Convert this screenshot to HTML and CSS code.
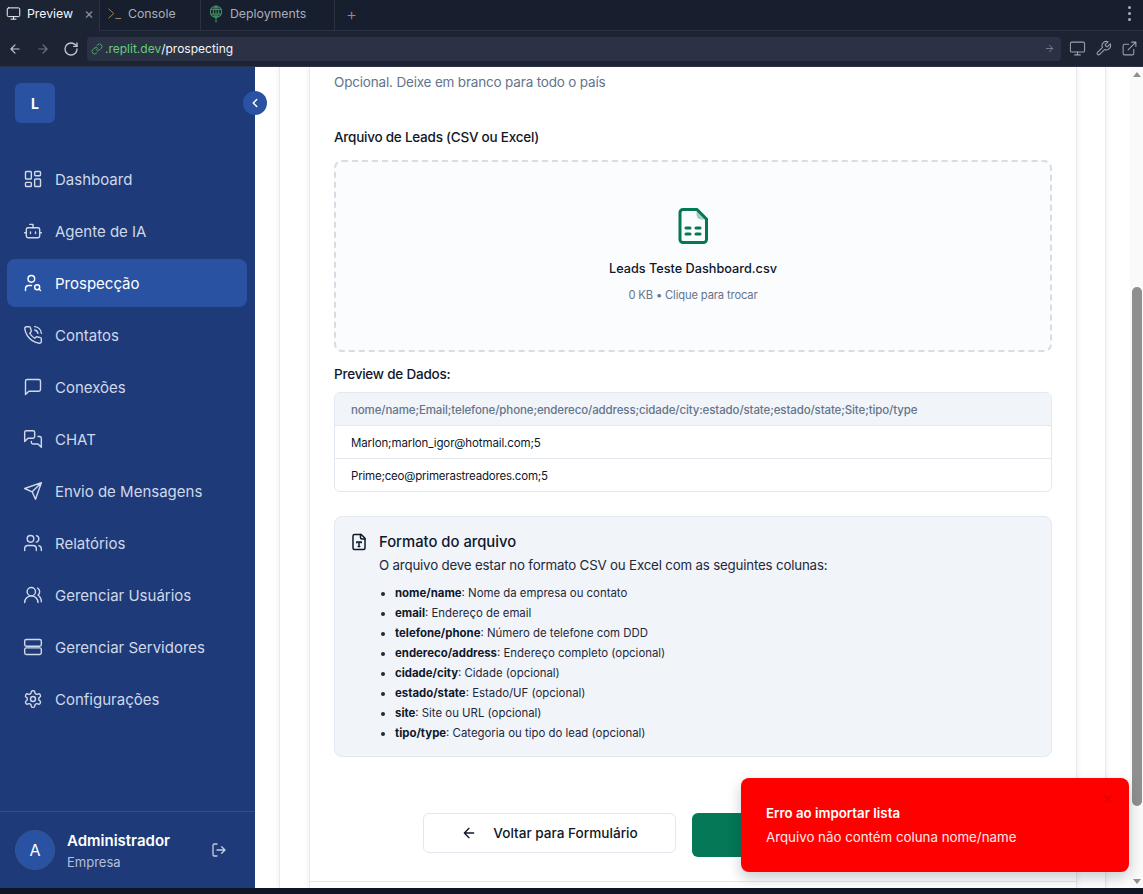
FILE: index.html
```html
<!DOCTYPE html>
<html lang="pt-BR">
<head>
  <meta charset="utf-8">
  <title>Prospecção</title>
  <link rel="stylesheet" href="styles.css">
</head>
<body>
  <div class="window">
    <div class="tabs">
      <div class="tab tab-active">
        <svg class="tab-icon" viewBox="0 0 24 24"><rect width="20" height="14" x="2" y="3" rx="2"/><path d="M8 21h8M12 17v4"/></svg>
        <span>Preview</span>
        <span class="tab-close">×</span>
      </div>
      <div class="tab tab-console">
        <svg class="tab-icon console-icon" viewBox="0 0 24 24"><path d="M3 5l8 7-8 7M14 20h8"/></svg>
        <span>Console</span>
      </div>
      <div class="tab tab-deploy">
        <svg class="tab-icon deploy-icon" viewBox="0 0 24 24"><circle cx="12" cy="9" r="7.5"/><path d="M12 1.5v21M5 6h14M5 12h14M12 1.5c-5 4-5 11 0 15M12 1.5c5 4 5 11 0 15"/></svg>
        <span>Deployments</span>
      </div>
      <div class="tab-rest">
        <span class="tab-plus">+</span>
        <span class="tab-dots"><i></i><i></i><i></i></span>
      </div>
    </div>
    <div class="urlbar">
      <svg class="nav-icon" viewBox="0 0 24 24"><path d="m12 19-7-7 7-7M19 12H5"/></svg>
      <svg class="nav-icon nav-dim" viewBox="0 0 24 24"><path d="m12 5 7 7-7 7M5 12h14"/></svg>
      <svg class="nav-icon nav-reload" viewBox="0 0 24 24"><path d="M21 12a9 9 0 1 1-9-9c2.52 0 4.93 1 6.74 2.74L21 8"/><path d="M21 3v5h-5"/></svg>
      <div class="url-input">
        <svg class="url-link" viewBox="0 0 24 24"><path d="M10 13a5 5 0 0 0 7.54.54l3-3a5 5 0 0 0-7.07-7.07l-1.72 1.71"/><path d="M14 11a5 5 0 0 0-7.54-.54l-3 3a5 5 0 0 0 7.07 7.07l1.71-1.71"/></svg>
        <span class="url-host">.replit.dev</span><span class="url-path">/prospecting</span>
        <svg class="url-go" viewBox="0 0 24 24"><path d="m12 5 7 7-7 7M5 12h14"/></svg>
      </div>
      <div class="url-tools">
        <svg viewBox="0 0 24 24"><rect width="20" height="14" x="2" y="3" rx="2"/><path d="M8 21h8M12 17v4"/></svg>
        <svg viewBox="0 0 24 24"><path d="M14.7 6.3a1 1 0 0 0 0 1.4l1.6 1.6a1 1 0 0 0 1.4 0l3.77-3.77a6 6 0 0 1-7.94 7.94l-6.91 6.91a2.12 2.12 0 0 1-3-3l6.91-6.91a6 6 0 0 1 7.94-7.94l-3.76 3.76z"/></svg>
        <svg viewBox="0 0 24 24"><path d="M18 13v6a2 2 0 0 1-2 2H5a2 2 0 0 1-2-2V8a2 2 0 0 1 2-2h6M15 3h6v6M10 14 21 3"/></svg>
      </div>
    </div>

    <div class="app">
      <aside class="sidebar">
        <div class="side-head">
          <div class="logo">L</div>
        </div>
        <button class="collapse">
          <svg viewBox="0 0 24 24"><path d="m15 18-6-6 6-6"/></svg>
        </button>
        <nav class="side-nav">
          <a class="nav-item">
            <svg viewBox="0 0 24 24"><rect width="7" height="9" x="3" y="3" rx="1"/><rect width="7" height="5" x="14" y="3" rx="1"/><rect width="7" height="9" x="14" y="12" rx="1"/><rect width="7" height="5" x="3" y="16" rx="1"/></svg>
            Dashboard
          </a>
          <a class="nav-item">
            <svg viewBox="0 0 24 24"><path d="M12 8V4H8"/><rect width="16" height="12" x="4" y="8" rx="2"/><path d="M2 14h2M20 14h2M15 13v2M9 13v2"/></svg>
            Agente de IA
          </a>
          <a class="nav-item nav-active">
            <svg viewBox="0 0 24 24"><circle cx="10" cy="7" r="4"/><path d="M10.3 15H7a4 4 0 0 0-4 4v2"/><circle cx="17" cy="17" r="3"/><path d="m21 21-1.9-1.9"/></svg>
            Prospecção
          </a>
          <a class="nav-item">
            <svg viewBox="0 0 24 24"><path d="M22 16.92v3a2 2 0 0 1-2.18 2 19.79 19.79 0 0 1-8.63-3.07 19.5 19.5 0 0 1-6-6 19.79 19.79 0 0 1-3.07-8.67A2 2 0 0 1 4.11 2h3a2 2 0 0 1 2 1.72 12.84 12.84 0 0 0 .7 2.81 2 2 0 0 1-.45 2.11L8.09 9.91a16 16 0 0 0 6 6l1.27-1.27a2 2 0 0 1 2.11-.45 12.84 12.84 0 0 0 2.81.7A2 2 0 0 1 22 16.92z"/><path d="M14.05 2a9 9 0 0 1 8 7.94M14.05 6A5 5 0 0 1 18 10"/></svg>
            Contatos
          </a>
          <a class="nav-item">
            <svg viewBox="0 0 24 24"><path d="M21 15a2 2 0 0 1-2 2H7l-4 4V5a2 2 0 0 1 2-2h14a2 2 0 0 1 2 2z"/></svg>
            Conexões
          </a>
          <a class="nav-item">
            <svg viewBox="0 0 24 24"><path d="M14 9a2 2 0 0 1-2 2H6l-4 4V4a2 2 0 0 1 2-2h8a2 2 0 0 1 2 2z"/><path d="M18 9h2a2 2 0 0 1 2 2v11l-4-4h-6a2 2 0 0 1-2-2v-1"/></svg>
            CHAT
          </a>
          <a class="nav-item">
            <svg viewBox="0 0 24 24"><path d="m22 2-7 20-4-9-9-4ZM22 2 11 13"/></svg>
            Envio de Mensagens
          </a>
          <a class="nav-item">
            <svg viewBox="0 0 24 24"><path d="M16 21v-2a4 4 0 0 0-4-4H6a4 4 0 0 0-4 4v2"/><circle cx="9" cy="7" r="4"/><path d="M22 21v-2a4 4 0 0 0-3-3.87M16 3.13a4 4 0 0 1 0 7.75"/></svg>
            Relatórios
          </a>
          <a class="nav-item">
            <svg viewBox="0 0 24 24"><path d="M18 21a8 8 0 0 0-16 0"/><circle cx="10" cy="8" r="5"/><path d="M22 20c0-3.37-2-6.5-4-8a5 5 0 0 0-.45-8.3"/></svg>
            Gerenciar Usuários
          </a>
          <a class="nav-item">
            <svg viewBox="0 0 24 24"><rect width="20" height="8" x="2" y="3" rx="2"/><rect width="20" height="8" x="2" y="13" rx="2"/></svg>
            Gerenciar Servidores
          </a>
          <a class="nav-item">
            <svg viewBox="0 0 24 24"><path d="M12.22 2h-.44a2 2 0 0 0-2 2v.18a2 2 0 0 1-1 1.73l-.43.25a2 2 0 0 1-2 0l-.15-.08a2 2 0 0 0-2.73.73l-.22.38a2 2 0 0 0 .73 2.73l.15.1a2 2 0 0 1 1 1.72v.51a2 2 0 0 1-1 1.74l-.15.09a2 2 0 0 0-.73 2.73l.22.38a2 2 0 0 0 2.73.73l.15-.08a2 2 0 0 1 2 0l.43.25a2 2 0 0 1 1 1.73V20a2 2 0 0 0 2 2h.44a2 2 0 0 0 2-2v-.18a2 2 0 0 1 1-1.73l.43-.25a2 2 0 0 1 2 0l.15.08a2 2 0 0 0 2.73-.73l.22-.39a2 2 0 0 0-.73-2.73l-.15-.08a2 2 0 0 1-1-1.74v-.5a2 2 0 0 1 1-1.74l.15-.09a2 2 0 0 0 .73-2.73l-.22-.38a2 2 0 0 0-2.73-.73l-.15.08a2 2 0 0 1-2 0l-.43-.25a2 2 0 0 1-1-1.73V4a2 2 0 0 0-2-2z"/><circle cx="12" cy="12" r="3"/></svg>
            Configurações
          </a>
        </nav>
        <div class="side-user">
          <div class="avatar">A</div>
          <div class="user-info">
            <div class="user-name">Administrador</div>
            <div class="user-org">Empresa</div>
          </div>
          <svg class="logout" viewBox="0 0 24 24"><path d="M9 21H5a2 2 0 0 1-2-2V5a2 2 0 0 1 2-2h4M16 17l5-5-5-5M21 12H9"/></svg>
        </div>
      </aside>

      <main class="content">
        <div class="panel">
          <div class="card">
            <div class="card-body">
              <p class="hint">Opcional. Deixe em branco para todo o país</p>

              <label class="field-label">Arquivo de Leads (CSV ou Excel)</label>
              <div class="dropzone">
                <svg class="file-icon" viewBox="0 0 30 36"><path d="M5 1.5h14l9.5 9.5v20.5a3 3 0 0 1-3 3H5a3 3 0 0 1-3-3V4.5a3 3 0 0 1 3-3z"/><path class="file-fold" d="M19 2v5a4 4 0 0 0 4 4h5z"/><path class="file-dash" d="M8 20h4M18 20h4M8 26h4M18 26h4"/></svg>
                <div class="file-name">Leads Teste Dashboard.csv</div>
                <div class="file-meta">0 KB • Clique para trocar</div>
              </div>

              <div class="preview-title">Preview de Dados:</div>
              <div class="preview">
                <div class="preview-row preview-head">nome/name;Email;telefone/phone;endereco/address;cidade/city:estado/state;estado/state;Site;tipo/type</div>
                <div class="preview-row">Marlon;marlon_igor@hotmail.com;5</div>
                <div class="preview-row">Prime;ceo@primerastreadores.com;5</div>
              </div>

              <div class="format">
                <svg class="format-icon" viewBox="0 0 24 24"><path d="M15 2H6a2 2 0 0 0-2 2v16a2 2 0 0 0 2 2h12a2 2 0 0 0 2-2V7Z"/><path d="M14 2v4a2 2 0 0 0 2 2h4M9 13v-1h6v1M12 12v6M11 18h2"/></svg>
                <div class="format-text">
                  <h3>Formato do arquivo</h3>
                  <p>O arquivo deve estar no formato CSV ou Excel com as seguintes colunas:</p>
                  <ul>
                    <li><b>nome/name</b>: Nome da empresa ou contato</li>
                    <li><b>email</b>: Endereço de email</li>
                    <li><b>telefone/phone</b>: Número de telefone com DDD</li>
                    <li><b>endereco/address</b>: Endereço completo (opcional)</li>
                    <li><b>cidade/city</b>: Cidade (opcional)</li>
                    <li><b>estado/state</b>: Estado/UF (opcional)</li>
                    <li><b>site</b>: Site ou URL (opcional)</li>
                    <li><b>tipo/type</b>: Categoria ou tipo do lead (opcional)</li>
                  </ul>
                </div>
              </div>

              <div class="actions">
                <button class="btn-back">
                  <svg viewBox="0 0 24 24"><path d="m12 19-7-7 7-7M19 12H5"/></svg>
                  Voltar para Formulário
                </button>
                <button class="btn-import"></button>
              </div>
            </div>
          </div>
        </div>
      </main>

      <div class="scrollbar">
        <span class="arrow-up"></span>
        <div class="scroll-track"><div class="scroll-thumb"></div></div>
        <span class="arrow-down"></span>
      </div>

      <div class="toast">
        <span class="toast-close">×</span>
        <div class="toast-title">Erro ao importar lista</div>
        <div class="toast-msg">Arquivo não contém coluna nome/name</div>
      </div>
    </div>
    <div class="bottom"></div>
  </div>
</body>
</html>
```

FILE: styles.css
```css
* {
  box-sizing: border-box;
}

html, body {
  margin: 0;
  height: 100%;
  overflow: hidden;
}

body {
  font-family: Inter, "Noto Sans", sans-serif;
  background: #0e1525;
  color: #0f172a;
}

svg {
  fill: none;
  stroke: currentColor;
  stroke-width: 2;
  stroke-linecap: round;
  stroke-linejoin: round;
  flex: none;
}

.window {
  display: flex;
  flex-direction: column;
  height: 894px;
}

/* replit chrome */
.tabs {
  display: flex;
  height: 31px;
  background: #171e2e;
  font-size: 12.3px;
  color: #a9aeb8;
}

.tab {
  display: flex;
  align-items: center;
  height: 31px;
  border-right: 1px solid #2b3245;
  border-bottom: 1px solid #2b3245;
  padding-bottom: 3px;
}

.tab-active {
  width: 100px;
  padding-left: 6px;
  gap: 6px;
  color: #f5f6f8;
  background: #1c2333;
  border-bottom-color: #1c2333;
}

.tab-console {
  width: 101px;
  padding-left: 7px;
  gap: 6px;
}

.tab-deploy {
  width: 134px;
  padding-left: 6px;
  gap: 5px;
}

.tab-icon {
  width: 15px;
  height: 15px;
  stroke-width: 1.6;
}

.console-icon {
  color: #9c8558;
}

.deploy-icon {
  width: 18px;
  height: 18px;
  color: #3f8f5f;
  stroke-width: 1.5;
}

.tab-close {
  font-size: 15px;
  color: #8a8f9a;
  margin-left: 5px;
}

.tab-rest {
  flex: 1;
  display: flex;
  align-items: center;
  justify-content: space-between;
  height: 31px;
  padding: 0 12px 3px 11px;
  border-bottom: 1px solid #2b3245;
}

.tab-plus {
  font-size: 17px;
  font-weight: 300;
  color: #8a8f9a;
}

.tab-dots {
  display: flex;
  flex-direction: column;
  gap: 3px;
}

.tab-dots i {
  width: 3px;
  height: 3px;
  border-radius: 50%;
  background: #a9aeb8;
}

.urlbar {
  display: flex;
  align-items: center;
  height: 36px;
  background: #1c2333;
  border-bottom: 1px solid #2b3245;
  padding-left: 8px;
  color: #c4c8d0;
}

.nav-icon {
  width: 14px;
  height: 14px;
  margin-right: 14px;
}

.nav-dim {
  color: #6f7583;
}

.nav-reload {
  width: 16px;
  height: 16px;
  margin-right: 8px;
  margin-left: -1px;
}

.url-input {
  display: flex;
  align-items: center;
  width: 974px;
  height: 24px;
  padding: 0 6px 0 4px;
  background: #2b3245;
  border-radius: 4px;
  font-size: 12px;
}

.url-link {
  width: 12px;
  height: 12px;
  margin-right: 2px;
  color: #4aa864;
}

.url-host {
  color: #62d076;
}

.url-path {
  color: #f5f6f8;
}

.url-go {
  width: 11px;
  height: 11px;
  margin-left: auto;
  color: #7b8190;
}

.url-tools {
  display: flex;
  gap: 9px;
  margin-left: 8px;
  color: #9ca1ac;
}

.url-tools svg {
  width: 17px;
  height: 17px;
  stroke-width: 1.5;
}

/* app */
.app {
  position: relative;
  display: flex;
  height: 821px;
  overflow: hidden;
  background: #fff;
}

.sidebar {
  position: relative;
  display: flex;
  flex-direction: column;
  width: 255px;
  flex: none;
  background: #1e3a78;
  color: #cfd9ea;
}

.side-head {
  padding: 16px 15px 0;
}

.logo {
  display: flex;
  align-items: center;
  justify-content: center;
  width: 40px;
  height: 40px;
  border-radius: 6px;
  background: #2a52a3;
  color: #fff;
  font-size: 14px;
  font-weight: 700;
}

.collapse {
  position: absolute;
  top: 24px;
  left: 243px;
  z-index: 3;
  display: flex;
  align-items: center;
  justify-content: center;
  width: 24px;
  height: 24px;
  padding: 0;
  border: none;
  border-radius: 50%;
  background: #2a52a3;
  color: #fff;
}

.collapse svg {
  width: 14px;
  height: 14px;
  stroke-width: 2.5;
}

.side-nav {
  display: flex;
  flex-direction: column;
  gap: 4px;
  padding: 32px 8px 0 7px;
}

.nav-item {
  display: flex;
  align-items: center;
  gap: 12px;
  height: 48px;
  padding-left: 16px;
  border-radius: 8px;
  font-size: 15px;
}

.nav-item svg {
  width: 20px;
  height: 20px;
  stroke-width: 1.7;
}

.nav-active {
  background: #2a52a3;
  color: #fff;
}

.side-user {
  display: flex;
  align-items: center;
  height: 77px;
  margin-top: auto;
  padding: 0 28px 0 15px;
  border-top: 1px solid #2f5096;
  color: #fff;
}

.avatar {
  display: flex;
  align-items: center;
  justify-content: center;
  width: 40px;
  height: 40px;
  border-radius: 50%;
  background: #2a52a3;
  border: 1px solid #36568f;
  font-size: 16px;
}

.user-info {
  margin-left: 12px;
  padding-top: 3px;
}

.user-name {
  font-size: 15px;
  font-weight: 600;
  line-height: 20px;
}

.user-org {
  font-size: 13px;
  line-height: 20px;
  margin-top: 1px;
  color: #b4c0d6;
}

.logout {
  width: 16px;
  height: 16px;
  margin-left: auto;
  color: #c3cde0;
}

/* page content */
.content {
  flex: 1;
  min-width: 0;
  padding: 0 24px;
  background: #fff;
}

.panel {
  height: 100%;
  padding: 0 28px 0 29px;
  background: #fff;
  border-left: 1px solid #e6e9f0;
  border-right: 1px solid #e6e9f0;
  box-shadow: 0 0 6px rgba(15, 23, 42, 0.08);
}

.card {
  height: 100%;
  background: #fff;
  border-left: 1px solid #e6e9f0;
  border-right: 1px solid #e6e9f0;
  box-shadow: 0 0 6px rgba(15, 23, 42, 0.08);
}

.card-body {
  height: 815px;
  padding: 5px 24px 0;
  border-bottom: 1px solid #e2e8f0;
}

.hint {
  margin: 0;
  font-size: 13.5px;
  letter-spacing: -0.18px;
  line-height: 20px;
  color: #64748b;
}

.field-label {
  display: block;
  margin-top: 34px;
  font-size: 13.5px;
  letter-spacing: -0.24px;
  font-weight: 500;
  line-height: 22px;
  color: #0f172a;
}

.dropzone {
  display: flex;
  flex-direction: column;
  align-items: center;
  height: 192px;
  margin-top: 12px;
  padding-top: 46px;
  background: #fbfcfe;
  border: 2px dashed #d8dce3;
  border-radius: 8px;
}

.file-icon {
  width: 30px;
  height: 36px;
  color: #047857;
  stroke-width: 3;
}

.file-fold {
  fill: currentColor;
  stroke-width: 1;
  opacity: 0.35;
}

.file-dash {
  stroke-width: 3;
}

.file-name {
  margin-top: 15px;
  font-size: 12.7px;
  font-weight: 500;
  line-height: 20px;
}

.file-meta {
  margin-top: 7px;
  font-size: 11.2px;
  letter-spacing: -0.14px;
  line-height: 18px;
  color: #64748b;
}

.preview-title {
  margin-top: 12px;
  font-size: 13.5px;
  letter-spacing: -0.22px;
  font-weight: 500;
  line-height: 20px;
}

.preview {
  margin-top: 8px;
  border: 1px solid #e2e8f0;
  border-radius: 6px;
  overflow: hidden;
}

.preview-row {
  display: flex;
  align-items: center;
  height: 33px;
  padding: 2px 16px 0;
  font-size: 11.5px;
  letter-spacing: -0.12px;
  border-top: 1px solid #e2e8f0;
}

.preview-row:first-child {
  border-top: none;
  height: 32px;
}

.preview-row:last-child {
  letter-spacing: -0.2px;
}

.preview-head {
  background: #f1f5f9;
  color: #64748b;
  font-weight: 500;
}

.format {
  display: flex;
  gap: 11px;
  height: 241px;
  margin-top: 24px;
  padding: 16px 15px;
  background: #f1f4f9;
  border: 1px solid #e2e8f0;
  border-radius: 8px;
}

.format-icon {
  width: 18px;
  height: 18px;
}

.format-text h3 {
  margin: 0;
  font-size: 14.8px;
  font-weight: 500;
  line-height: 18px;
}

.format-text p {
  margin: 4px 0 0;
  font-size: 13.3px;
  letter-spacing: -0.18px;
  line-height: 20px;
  color: #1e293b;
}

.format-text ul {
  margin: 8px 0 0;
  padding-left: 16px;
  font-size: 11.4px;
  line-height: 20px;
  color: #1e293b;
}

.format-text b {
  font-weight: 700;
  color: #0f172a;
}

.actions {
  display: flex;
  align-items: flex-start;
  justify-content: center;
  gap: 16px;
  margin-top: 56px;
}

.actions button {
  font-family: inherit;
  font-size: 13.6px;
  font-weight: 500;
  border-radius: 6px;
}

.btn-back {
  display: flex;
  align-items: center;
  justify-content: center;
  gap: 16px;
  width: 253px;
  height: 40px;
  background: #fff;
  border: 1px solid #e2e8f0;
  color: #0f172a;
}

.btn-back svg {
  width: 16px;
  height: 16px;
}

.btn-import {
  width: 271px;
  height: 44px;
  border: none;
  background: #047857;
}

.scrollbar {
  display: flex;
  flex-direction: column;
  align-items: center;
  width: 13px;
  flex: none;
  background: #fafafa;
}

.arrow-up,
.arrow-down {
  width: 0;
  height: 0;
  border-left: 4px solid transparent;
  border-right: 4px solid transparent;
}

.arrow-up {
  margin-top: 5px;
  border-bottom: 5px solid #8f8f8f;
}

.arrow-down {
  margin-bottom: 4px;
  border-top: 5px solid #8f8f8f;
}

.scroll-track {
  flex: 1;
  width: 100%;
  padding: 210px 1px 73px 2px;
}

.scroll-thumb {
  height: 100%;
  border-radius: 5px;
  background: #8f8f8f;
}

.toast {
  position: absolute;
  left: 741px;
  top: 711px;
  z-index: 5;
  width: 388px;
  height: 94px;
  padding: 25px 25px 0;
  background: #ff0000;
  border-radius: 8px;
  color: #fff;
  box-shadow: 0 6px 14px rgba(15, 23, 42, 0.22);
}

.toast-close {
  position: absolute;
  top: 9px;
  right: 15px;
  font-size: 18px;
  color: #e40000;
}

.toast-title {
  font-size: 13.3px;
  font-weight: 600;
  line-height: 20px;
}

.toast-msg {
  margin-top: 4px;
  font-size: 13.3px;
  line-height: 20px;
  color: #ffeaea;
}

.bottom {
  height: 6px;
  background: #0e1525;
}
```
